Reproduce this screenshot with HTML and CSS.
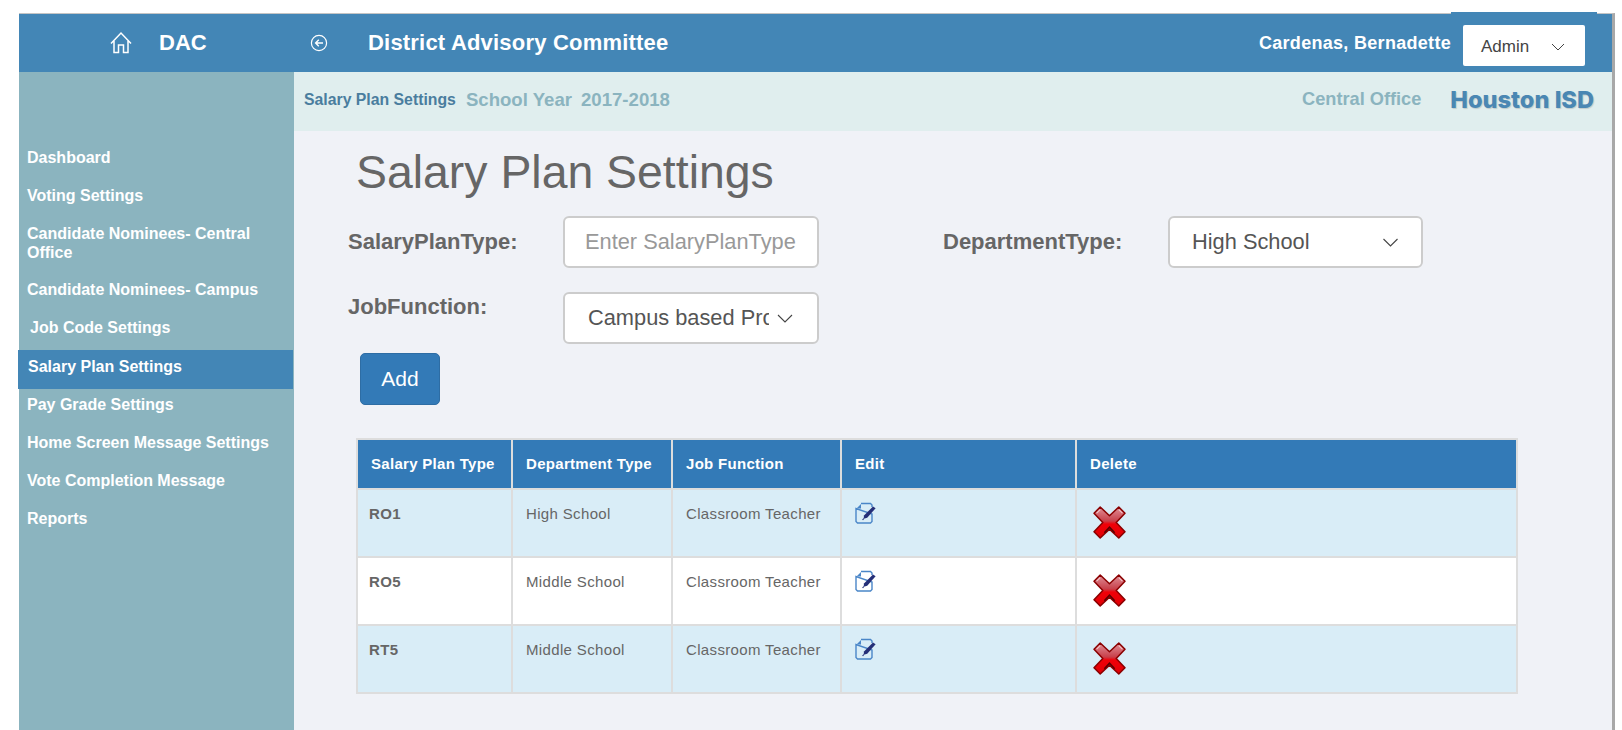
FILE: index.html
```html
<!DOCTYPE html>
<html>
<head>
    <title>District Advisory Committee</title>
    <link rel="stylesheet" href="styles.css">
</head>
<body>

<div class="frame">
    <div class="topbar">
        <div class="brand">
            <svg class="home-icon" viewBox="0 0 24 24" width="24" height="24">
                <path d="M2 12.5 12 2l10 10.5M5 10v11.5h4.5V14h5v7.5H19V10" fill="none" stroke="#fff" stroke-width="1.5"/>
            </svg>
            <span>DAC</span>
        </div>
        <svg class="back-icon" viewBox="0 0 18 18" width="18" height="18">
            <circle cx="9" cy="9" r="7.6" fill="none" stroke="#fff" stroke-width="1.2"/>
            <path d="M13 9H6M8.8 5.8 5.6 9l3.2 3.2" fill="none" stroke="#fff" stroke-width="1.4"/>
        </svg>
        <div class="app-title">District Advisory Committee</div>
        <div class="user-name">Cardenas, Bernadette</div>
        <div class="role-patch">
            <div class="role-select">
                <span>Admin</span>
                <svg viewBox="0 0 14 8" width="14" height="8"><path d="M1 1l6 6 6-6" fill="none" stroke="#444" stroke-width="1"/></svg>
            </div>
        </div>
    </div>

    <div class="content">
        <div class="sidebar">
            <a class="nav-item">Dashboard</a>
            <a class="nav-item">Voting Settings</a>
            <a class="nav-item nav-wrap">Candidate Nominees- Central Office</a>
            <a class="nav-item">Candidate Nominees- Campus</a>
            <a class="nav-item nav-indent">Job Code Settings</a>
            <a class="nav-item active">Salary Plan Settings</a>
            <a class="nav-item">Pay Grade Settings</a>
            <a class="nav-item">Home Screen Message Settings</a>
            <a class="nav-item">Vote Completion Message</a>
            <a class="nav-item">Reports</a>
        </div>

        <div class="main">
            <div class="subbar">
                <span class="crumb">Salary Plan Settings</span>
                <span class="year">School Year</span>
                <span class="year">2017-2018</span>
                <span class="office">Central Office</span>
                <span class="district">Houston ISD</span>
            </div>

            <div class="page">
                <h1>Salary Plan Settings</h1>

                <div class="form-row">
                    <label class="label-first">SalaryPlanType:</label>
                    <input class="field" type="text" placeholder="Enter SalaryPlanType">
                    <label class="label-second">DepartmentType:</label>
                    <div class="field select select-dept"><span class="select-text">High School</span><svg viewBox="0 0 16 9" width="17" height="9"><path d="M1 1l7 7 7-7" fill="none" stroke="#444" stroke-width="1.1"/></svg></div>
                </div>
                <div class="form-row form-row-job">
                    <label class="label-first label-job">JobFunction:</label>
                    <div class="field select select-job"><span class="select-text">Campus based Professional</span><svg viewBox="0 0 16 9" width="16" height="9"><path d="M1 1l7 7 7-7" fill="none" stroke="#444" stroke-width="1.1"/></svg></div>
                </div>
                <button class="add-btn">Add</button>

                <table class="plans">
                    <thead>
                        <tr>
                            <th class="col-type">Salary Plan Type</th>
                            <th class="col-dept">Department Type</th>
                            <th class="col-job">Job Function</th>
                            <th class="col-edit">Edit</th>
                            <th>Delete</th>
                        </tr>
                    </thead>
                    <tbody>
                        <tr class="shaded">
                            <td class="code">RO1</td>
                            <td>High School</td>
                            <td>Classroom Teacher</td>
                            <td><svg class="edit-icon" viewBox="0 0 22 22" width="22" height="22"><use href="#edit"/></svg></td>
                            <td class="del-cell"><svg class="del-icon" viewBox="0 0 32 32" width="33" height="33"><use href="#del"/></svg></td>
                        </tr>
                        <tr>
                            <td class="code">RO5</td>
                            <td>Middle School</td>
                            <td>Classroom Teacher</td>
                            <td><svg class="edit-icon" viewBox="0 0 22 22" width="22" height="22"><use href="#edit"/></svg></td>
                            <td class="del-cell"><svg class="del-icon" viewBox="0 0 32 32" width="33" height="33"><use href="#del"/></svg></td>
                        </tr>
                        <tr class="shaded">
                            <td class="code">RT5</td>
                            <td>Middle School</td>
                            <td>Classroom Teacher</td>
                            <td><svg class="edit-icon" viewBox="0 0 22 22" width="22" height="22"><use href="#edit"/></svg></td>
                            <td class="del-cell"><svg class="del-icon" viewBox="0 0 32 32" width="33" height="33"><use href="#del"/></svg></td>
                        </tr>
                    </tbody>
                </table>
            </div>
        </div>
    </div>
</div>

<svg class="icon-defs" width="0" height="0">
    <defs>
        <linearGradient id="red-top" x1="0" y1="0" x2="0" y2="1">
            <stop offset="0" stop-color="#e09098"/>
            <stop offset="0.45" stop-color="#c8404a"/>
            <stop offset="0.55" stop-color="#f00008"/>
            <stop offset="1" stop-color="#e00006"/>
        </linearGradient>
        <symbol id="edit" viewBox="0 0 22 22">
            <path d="M6 1.5H15.5L17 3V5M17 12V19.5L15.5 21H2.5L1 19.5V6.5Z" fill="none" stroke="#4a86c8" stroke-width="1.4"/>
            <path d="M1.5 6.5H6V2Z" fill="#4a86c8"/>
            <path d="M9 13.5 18 4.5l2.6 1.8-8.4 9.4-3.6 1z" fill="#252f78"/>
            <path d="M8.8 16.5 7.6 18" stroke="#252f78" stroke-width="1.2"/>
        </symbol>
        <symbol id="del" viewBox="0 0 32 32">
            <path d="M7 1 16 9.5 25 1 31 7 22.5 16 31 25 25 31 16 22.5 7 31 1 25 9.5 16 1 7Z" fill="url(#red-top)" stroke="#8a0000" stroke-width="1.5" stroke-linejoin="round"/>
            <path d="M3.5 7 7 3.5M25 3.5 28.5 7" fill="none" stroke="#f4c4c8" stroke-width="1"/>
            <path d="M11 26 16 20.5 21 26" fill="none" stroke="#5a0000" stroke-width="1.5"/>
        </symbol>
    </defs>
</svg>

</body>
</html>
```

FILE: styles.css
```css
html, body {
    height: 100%;
}
body {
    margin: 0;
    padding: 13px 7px 0 19px;
    box-sizing: border-box;
    background: #fff;
    font-family: "Liberation Sans", Arial, sans-serif;
    overflow: hidden;
}
.frame {
    height: 100%;
    border-top: 1px solid #c4c4c4;
    border-right: 3px solid #a8a8a8;
    display: flex;
    flex-direction: column;
}
.topbar {
    height: 58px;
    flex: none;
    background: #4386b6;
    color: #fff;
    display: flex;
    align-items: center;
}
.brand {
    width: 275px;
    flex: none;
    display: flex;
    align-items: center;
    font-size: 22px;
    font-weight: bold;
    box-sizing: border-box;
    padding-left: 90px;
    gap: 26px;
}
.back-icon {
    margin-left: 16px;
}
.app-title {
    margin-left: 40px;
    font-size: 22px;
    font-weight: bold;
    letter-spacing: 0.2px;
}
.user-name {
    margin-left: auto;
    font-size: 18px;
    font-weight: bold;
    letter-spacing: 0.3px;
}
.role-patch {
    align-self: flex-start;
    margin: -2px 15px 0 0;
    height: 59px;
    padding: 13px 12px 0;
    box-sizing: border-box;
    background: #4386b6;
}
.role-select {
    width: 122px;
    height: 41px;
    box-sizing: border-box;
    padding: 3px 20px 0 18px;
    background: #fff;
    border-radius: 2px;
    color: #444;
    font-size: 17px;
    display: flex;
    align-items: center;
    justify-content: space-between;
}
.content {
    flex: 1;
    display: flex;
    min-height: 0;
}
.sidebar {
    width: 275px;
    flex: none;
    background: #8bb4bf;
    padding-top: 76px;
    box-sizing: border-box;
}
.nav-item {
    display: block;
    color: #fff;
    font-size: 16px;
    font-weight: bold;
    line-height: 19px;
    padding: 0 20px 0 8px;
    margin-bottom: 19px;
}
.nav-wrap {
    margin-bottom: 18px;
}
.nav-indent {
    padding-left: 11px;
    margin-bottom: 13px;
}
.nav-item.active {
    background: #4386b6;
    height: 39px;
    line-height: 33px;
    margin: 0 1px 6px -1px;
    padding-left: 10px;
}
.main {
    flex: 1;
    min-width: 0;
    background: #f0f2f7;
}
.subbar {
    height: 59px;
    box-sizing: border-box;
    background: #e0eeee;
    display: flex;
    align-items: center;
    padding: 0 18px 4px 10px;
}
.crumb {
    color: #4a7d9e;
    font-size: 15.8px;
    font-weight: bold;
    margin-right: 10px;
}
.year {
    color: #8bb4bf;
    font-size: 18.6px;
    font-weight: bold;
    margin-right: 9px;
}
.office {
    color: #8bb4bf;
    font-size: 18.2px;
    font-weight: bold;
    margin-left: auto;
}
.district {
    color: #4a87b3;
    font-family: Inter, "Liberation Sans", sans-serif;
    font-size: 23.6px;
    font-weight: 800;
    margin-left: 29px;
    text-shadow: 1px 1px 1px rgba(0, 0, 0, 0.15);
}
.page {
    padding-left: 63px;
}
h1 {
    margin: 13px 0 0 -1px;
    color: #666;
    font-size: 46.4px;
    font-weight: normal;
    line-height: 56px;
}
.form-row {
    display: flex;
    align-items: center;
    margin-top: 16px;
    height: 52px;
}
.form-row-job {
    margin-top: 24px;
}
label {
    color: #666;
    font-size: 22px;
    font-weight: bold;
}
.label-first {
    width: 215px;
    margin-left: -9px;
    flex: none;
}
.label-job {
    align-self: flex-start;
    margin-top: 2px;
}
.label-second {
    width: 225px;
    margin-left: 124px;
    flex: none;
}
.field {
    width: 256px;
    height: 52px;
    box-sizing: border-box;
    flex: none;
    border: 2px solid #ccc;
    border-radius: 6px;
    background: #fff;
    font-family: inherit;
    font-size: 21.8px;
    color: #555;
    padding: 0 14px 0 20px;
}
.field::placeholder {
    color: #999;
}
.select {
    display: flex;
    align-items: center;
    justify-content: space-between;
}
.select-text {
    white-space: nowrap;
    overflow: hidden;
    flex: 1;
}
.select svg {
    flex: none;
}
.select-dept {
    width: 255px;
    padding-left: 22px;
    padding-right: 22px;
}
.select-job {
    padding-left: 23px;
    padding-right: 24px;
}
.select-job .select-text {
    margin-right: 8px;
}
.add-btn {
    display: block;
    width: 80px;
    height: 52px;
    margin: 9px 0 0 3px;
    background: #337ab7;
    border: 1px solid #2e6da4;
    border-radius: 5px;
    color: #fff;
    font-family: inherit;
    font-size: 21px;
}
.plans {
    margin: 33px 0 0 -1px;
    width: 1162px;
    table-layout: fixed;
    border-collapse: collapse;
    border: 2px solid #ddd;
    font-size: 15px;
    letter-spacing: 0.35px;
    color: #666;
}
.plans th {
    height: 50px;
    box-sizing: border-box;
    background: #337ab7;
    color: #fff;
    font-size: 15px;
    font-weight: bold;
    letter-spacing: 0.3px;
    text-align: left;
    padding: 0 13px 2px;
    border: 2px solid #ddd;
}
.plans td {
    height: 68px;
    padding: 14px 13px 0;
    box-sizing: border-box;
    vertical-align: top;
    border: 2px solid #ddd;
    background: #fff;
    line-height: 20px;
}
.plans .shaded td {
    background: #d9edf7;
}
.col-type { width: 155px; }
.col-dept { width: 160px; }
.col-job { width: 169px; }
.col-edit { width: 235px; }
.plans .code {
    font-weight: bold;
    padding-left: 11px;
}
.edit-icon {
    display: block;
    margin: -2px 0 0 0;
}
.del-icon {
    display: block;
    margin: 2px 0 0 3px;
}
.icon-defs {
    position: absolute;
}
```
